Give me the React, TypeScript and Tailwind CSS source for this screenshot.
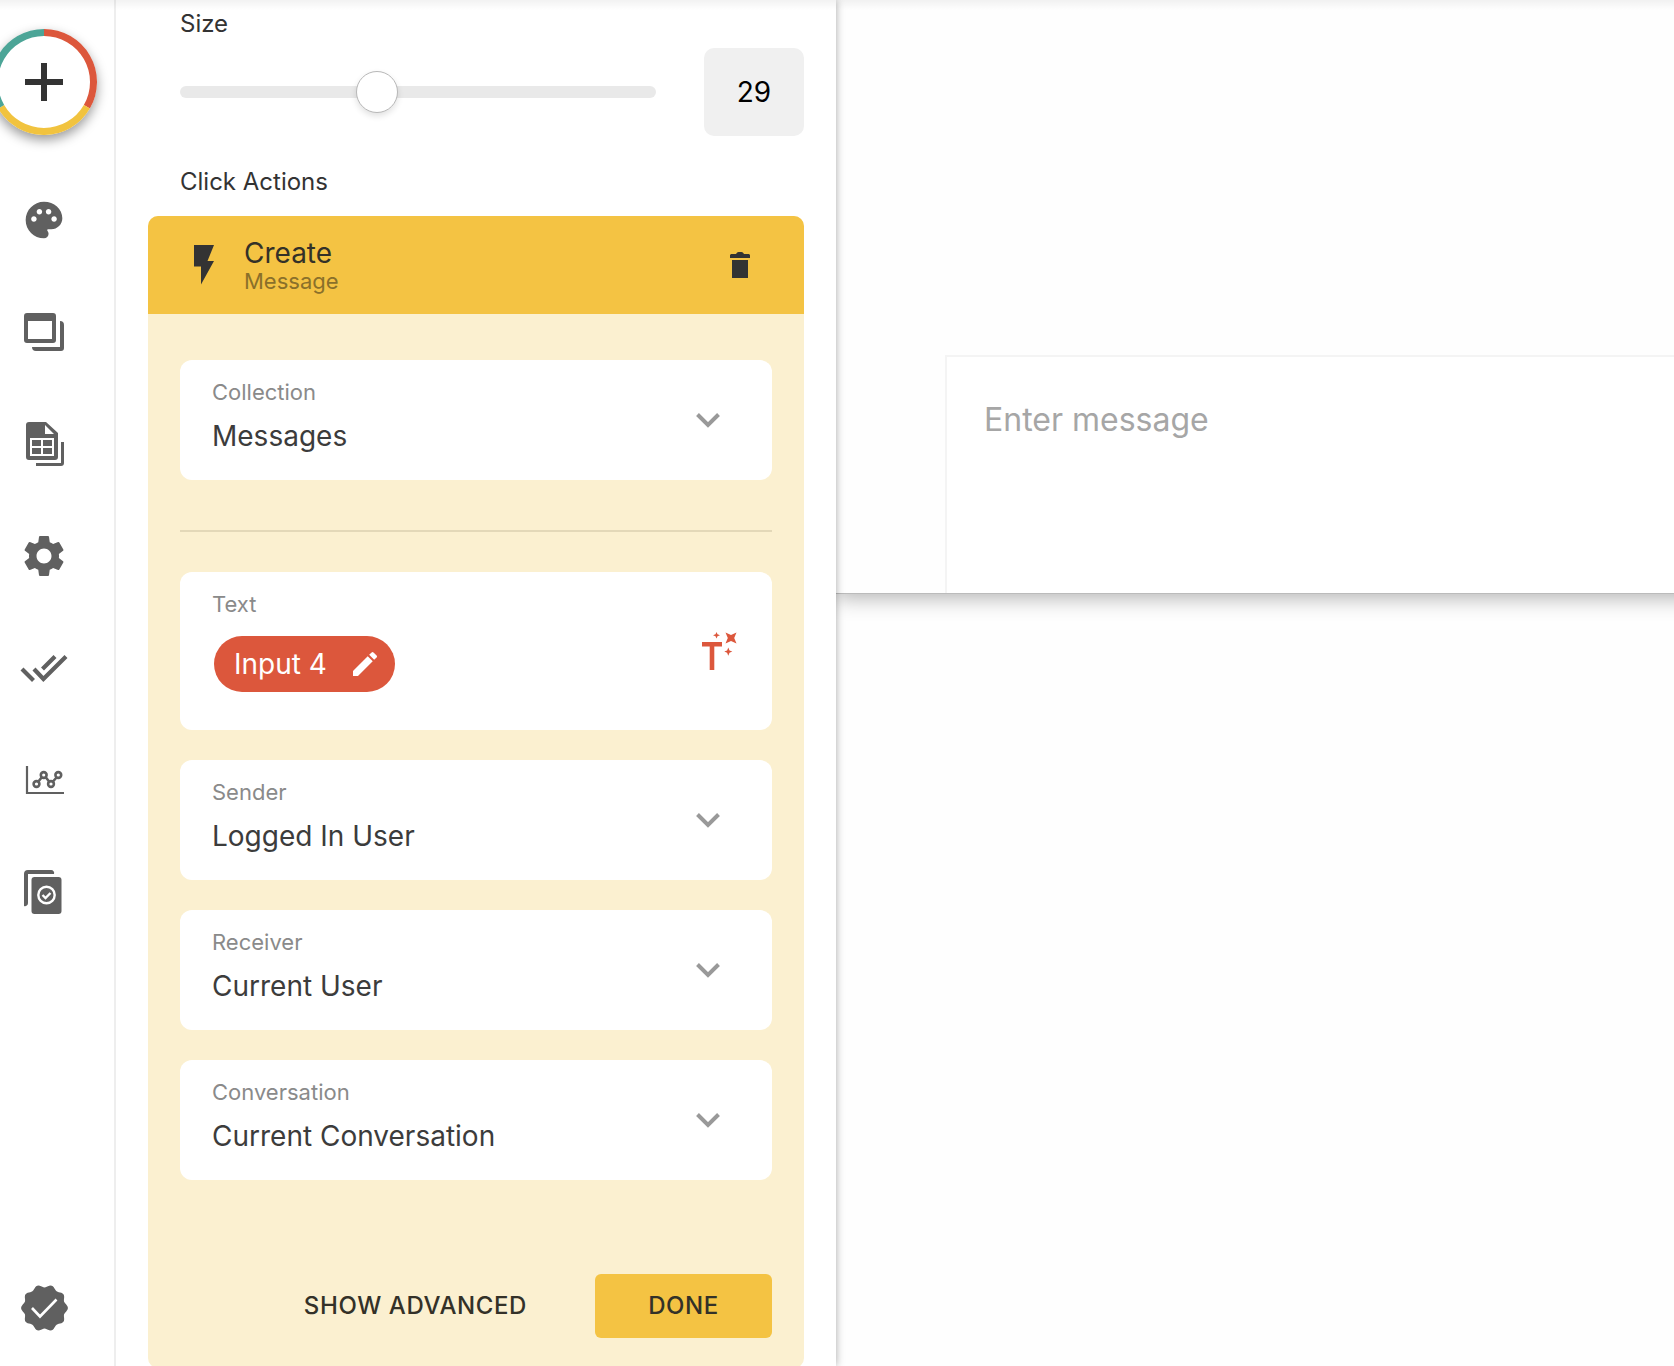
import { useState, type ReactNode } from "react";
import { MdPalette, MdSettings, MdEdit } from "react-icons/md";

function NavIcon({ children }: { children: ReactNode }) {
  return (
    <svg viewBox="0 0 48 48" className="size-12 overflow-visible" fill="none" aria-hidden="true">
      {children}
    </svg>
  );
}

function ScreensIcon() {
  return (
    <NavIcon>
      <path
        fill="currentColor"
        fillRule="evenodd"
        d="M7 5H33a3 3 0 0 1 3 3V32a3 3 0 0 1-3 3H7a3 3 0 0 1-3-3V8a3 3 0 0 1 3-3ZM8 13V31H32V13Z"
      />
      <path fill="currentColor" d="M40 13a4 4 0 0 1 4 4V40a3 3 0 0 1-3 3H16a4 4 0 0 1-4-4H40Z" />
    </NavIcon>
  );
}

function DatabaseIcon() {
  return (
    <NavIcon>
      <path
        fill="currentColor"
        fillRule="evenodd"
        d="M9 2H26L38 13V37a3 3 0 0 1-3 3H9a3 3 0 0 1-3-3V5a3 3 0 0 1 3-3ZM25 5V14H34ZM10 18V36H34V18Z"
      />
      <path fill="currentColor" d="M12 20h9v6h-9zM23 20h9v6h-9zM12 28h9v6h-9zM23 28h9v6h-9z" />
      <path fill="currentColor" d="M41 22h3V43a3 3 0 0 1-3 3H16V43H41Z" />
    </NavIcon>
  );
}

function ChecksIcon() {
  return (
    <NavIcon>
      <path
        stroke="currentColor"
        strokeWidth="4.2"
        d="M2 25 13.5 36.5M14 25 23.4 35 46 12.5M22.5 25 35 12.5"
      />
    </NavIcon>
  );
}

function ChartIcon() {
  return (
    <NavIcon>
      <path stroke="currentColor" strokeWidth="2.2" d="M7 10V37H44" />
      <path stroke="currentColor" strokeWidth="2.6" d="M18 26 22 21M25.500 21 29.500 26M32.500 26 37 21" />
      <g stroke="currentColor" strokeWidth="2.6">
        <circle cx="16.500" cy="28" r="2.900" />
        <circle cx="23.700" cy="19" r="2.900" />
        <circle cx="31" cy="28" r="2.900" />
        <circle cx="38.300" cy="19" r="2.900" />
      </g>
    </NavIcon>
  );
}

function VersionsIcon() {
  return (
    <NavIcon>
      <path fill="currentColor" d="M8 2H31a3 3 0 0 1 3 4H8V35a3 3 0 0 1-4 3V6a4 4 0 0 1 4-4Z" />
      <rect x="11.500" y="9" width="30" height="37" rx="3" fill="currentColor" />
      <circle cx="26.500" cy="27" r="8.200" stroke="#fff" strokeWidth="2.400" />
      <path d="M22.500 27 25.500 30 30.500 25" stroke="#fff" strokeWidth="2.400" />
    </NavIcon>
  );
}

/* Ten-lobed seal outline */
const sealPath =
  Array.from({ length: 120 }, (_, i) => {
    const a = (i / 120) * Math.PI * 2;
    const r = 22 + 1.4 * Math.cos(10 * a);
    return `${i === 0 ? "M" : "L"}${(24.5 + r * Math.cos(a)).toFixed(2)} ${(24 + r * Math.sin(a)).toFixed(2)}`;
  }).join("") + "Z";

function SealIcon() {
  return (
    <NavIcon>
      <path fill="currentColor" d={sealPath} />
      <path d="M12 24 20 32.500 36.500 15.500" stroke="#fff" strokeWidth="2.600" />
    </NavIcon>
  );
}

function AddButton() {
  return (
    <button
      type="button"
      aria-label="Add"
      className="-ml-[9px] size-[106px] shrink-0 rounded-full shadow-[0_5px_12px_rgba(0,0,0,0.4)]"
    >
      <svg viewBox="-53 -53 106 106" className="size-full" fill="none" aria-hidden="true">
        <circle r="52" fill="#fff" />
        <g strokeWidth="7">
          <path stroke="#dc573c" d="M0-49.500A49.500 49.500 0 0 1 42.870 24.750" />
          <path stroke="#f1c33f" d="M42.870 24.750A49.500 49.500 0 0 1-42.870 24.750" />
          <path stroke="#4ca597" d="M-42.870 24.750A49.500 49.500 0 0 1 0-49.500" />
        </g>
        <path stroke="#333" strokeWidth="6" d="M-19 0H19M0-19V19" />
      </svg>
    </button>
  );
}

const navItems: { label: string; icon: ReactNode }[] = [
  {
    label: "Branding",
    icon: (
      <NavIcon>
        <MdPalette x={2} y={2} size={44} />
      </NavIcon>
    ),
  },
  { label: "Screens", icon: <ScreensIcon /> },
  { label: "Database", icon: <DatabaseIcon /> },
  {
    label: "Settings",
    icon: (
      <NavIcon>
        <MdSettings x={-1} y={-1} size={50} />
      </NavIcon>
    ),
  },
  { label: "Publish", icon: <ChecksIcon /> },
  { label: "Analytics", icon: <ChartIcon /> },
  { label: "Versions", icon: <VersionsIcon /> },
];

function Sidebar() {
  return (
    <nav className="flex w-[116px] shrink-0 flex-col border-r-2 border-[#eee] bg-white pt-[29px] pb-[34px] text-[#606060]">
      <AddButton />
      <div className="mt-[61px] flex flex-col items-start gap-16 pl-5">
        {navItems.map((item) => (
          <button key={item.label} type="button" aria-label={item.label}>
            {item.icon}
          </button>
        ))}
      </div>
      <button type="button" aria-label="Status" className="mt-auto ml-5 self-start">
        <SealIcon />
      </button>
    </nav>
  );
}

function Chevron() {
  return (
    <svg viewBox="0 0 24 16" className="pointer-events-none h-4 w-6" fill="none" aria-hidden="true">
      <path d="M1.500 2.500 12 13 22.500 2.500" stroke="#999" strokeWidth="4" />
    </svg>
  );
}

function SelectField({ id, label, value }: { id: string; label: string; value: string }) {
  return (
    <div className="flex h-[120px] items-center rounded-xl bg-white pr-[52px] pl-8">
      <div className="flex flex-1 flex-col">
        <label htmlFor={id} className="text-[22px] leading-7 text-[#8a8a8a]">
          {label}
        </label>
        <select
          id={id}
          defaultValue={value}
          className="mt-3 mb-2 w-full appearance-none bg-transparent text-[28px] leading-9 text-[#3c3c3c] outline-none"
        >
          <option>{value}</option>
        </select>
      </div>
      <Chevron />
    </div>
  );
}

function MagicTextIcon() {
  return (
    <svg viewBox="0 0 36 40" className="h-10 w-9" fill="#dc573c" aria-hidden="true">
      <path d="M0 11H20V15.500H12.300V39H7.700V15.500H0Z" />
      <path d="M23.500 1.500 29 4 34.500 1.500 32.200 7 34.500 12.500 29 10 23.500 12.500 25.800 7Z" />
      <path d="M14.500 1 15.500 3.300 18 4.300 15.500 5.300 14.500 7.600 13.500 5.300 11 4.300 13.500 3.300Z" />
      <path d="M26.300 16.500 27.500 19.500 30.300 20.600 27.500 21.700 26.300 24.700 25.100 21.700 22.300 20.600 25.100 19.500Z" />
    </svg>
  );
}

function ActionCard() {
  return (
    <section className="rounded-[10px] bg-[#fbf0d0]">
      <header className="flex h-[98px] items-center rounded-t-[10px] bg-[#f4c343] pr-[54px] pl-[46px]">
        <svg viewBox="0 0 20 40" className="h-10 w-5" fill="#333" aria-hidden="true">
          <path d="M0 0H20L13.500 16H20L7 39.500V21.500H0Z" />
        </svg>
        <div className="ml-[30px] flex-1">
          <h2 className="text-[28px] leading-8 text-[#333128]">Create</h2>
          <p className="text-[22px] leading-6 text-[#8a702a]">Message</p>
        </div>
        <button type="button" aria-label="Delete action">
          <svg viewBox="0 0 20 26" className="h-[26px] w-5" fill="#333" aria-hidden="true">
            <path d="M1 2H6Q7 0 8.500 0H11.500Q13 0 14 2H19L20 3V6H0V3Z" />
            <path d="M2 8H18V26H2Z" />
          </svg>
        </button>
      </header>

      <div className="px-8 pt-[46px] pb-[30px]">
        <SelectField id="collection" label="Collection" value="Messages" />
        <hr className="mt-[50px] mb-10 border-t-2 border-[#e3d8b8]" />
        <div className="flex flex-col gap-[30px]">
          <div className="flex h-[158px] items-center rounded-xl bg-white pr-[34px] pl-8">
            <div className="flex flex-1 flex-col items-start">
              <p className="text-[22px] leading-7 text-[#8a8a8a]">Text</p>
              <button
                type="button"
                className="mt-[18px] mb-5 ml-0.5 flex h-14 min-w-[181px] items-center justify-between rounded-full bg-[#dc573c] pr-3.5 pl-5 text-[28px] text-white"
              >
                Input 4
                <MdEdit className="size-8" />
              </button>
            </div>
            <button type="button" aria-label="Insert magic text">
              <MagicTextIcon />
            </button>
          </div>
          <SelectField id="sender" label="Sender" value="Logged In User" />
          <SelectField id="receiver" label="Receiver" value="Current User" />
          <SelectField id="conversation" label="Conversation" value="Current Conversation" />
        </div>
        <div className="mt-[94px] flex items-center justify-end gap-[68px] text-[24px] font-medium tracking-wide text-[#333128]">
          <button type="button">SHOW ADVANCED</button>
          <button type="button" className="h-16 w-[177px] rounded-md bg-[#f4c343]">
            DONE
          </button>
        </div>
      </div>
    </section>
  );
}

function SizeControl() {
  const [size, setSize] = useState(29);
  return (
    <div>
      <label htmlFor="size" className="block pl-8 text-[24px] leading-8 text-[#333]">
        Size
      </label>
      <div className="mt-2 flex h-[88px] items-center gap-12 pl-8">
        <input
          id="size"
          type="range"
          min={1}
          max={70}
          value={size}
          onChange={(e) => setSize(Number(e.target.value))}
          className="h-3 min-w-0 flex-1 appearance-none rounded-full bg-[#e9e9e9] [&::-webkit-slider-thumb]:size-[42px] [&::-webkit-slider-thumb]:appearance-none [&::-webkit-slider-thumb]:rounded-full [&::-webkit-slider-thumb]:border [&::-webkit-slider-thumb]:border-[#b8b8b8] [&::-webkit-slider-thumb]:bg-white [&::-webkit-slider-thumb]:shadow-[0_3px_6px_rgba(0,0,0,0.12)]"
        />
        <input
          aria-label="Size value"
          type="text"
          value={size}
          onChange={(e) => setSize(Number(e.target.value) || 0)}
          className="h-full w-[100px] rounded-[10px] bg-[#f0f0f0] text-center text-[28px] text-black outline-none"
        />
      </div>
    </div>
  );
}

function Canvas() {
  return (
    <main className="flex min-w-0 flex-1 flex-col bg-[#fefefe]">
      <div className="-mr-10 flex h-[594px] flex-col justify-end border-b border-[#bbb] bg-[#fefefe] pl-[109px] shadow-[0_4px_20px_rgba(0,0,0,0.3)]">
        <textarea
          aria-label="Message"
          placeholder="Enter message"
          className="block h-[238px] w-full resize-none border-t-2 border-l-2 border-[#f4f4f4] bg-white px-[37px] pt-10 text-[32px] leading-[46px] outline-none placeholder:text-[#a6a6a6]"
        />
      </div>
    </main>
  );
}

export default function App() {
  return (
    <div className="relative flex h-screen overflow-hidden bg-white font-['Inter',sans-serif]">
      <Sidebar />
      <aside className="z-10 w-[720px] shrink-0 bg-white px-8 pt-2 shadow-[0_0_8px_rgba(0,0,0,0.35)] [clip-path:inset(0_-20px_0_0)]">
        <SizeControl />
        <h3 className="mt-[30px] mb-[18px] pl-8 text-[24px] leading-8 text-[#333]">Click Actions</h3>
        <ActionCard />
      </aside>
      <Canvas />
      <div className="pointer-events-none absolute inset-x-0 top-0 z-20 h-2.5 bg-linear-to-b from-black/5 to-transparent" />
    </div>
  );
}
